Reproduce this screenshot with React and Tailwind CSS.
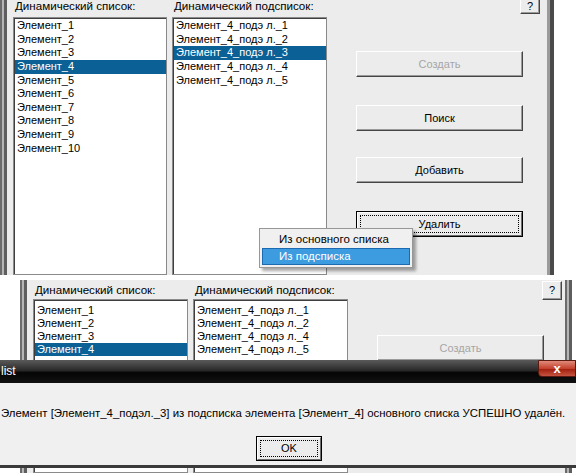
import React from "react";

const mainItems = ["Элемент_1","Элемент_2","Элемент_3","Элемент_4","Элемент_5","Элемент_6","Элемент_7","Элемент_8","Элемент_9","Элемент_10"];
const mainItems2 = ["Элемент_1","Элемент_2","Элемент_3","Элемент_4"];
const subItems = ["Элемент_4_подэ л._1","Элемент_4_подэ л._2","Элемент_4_подэ л._3","Элемент_4_подэ л._4","Элемент_4_подэ л._5"];
const subItems2 = ["Элемент_4_подэ л._1","Элемент_4_подэ л._2","Элемент_4_подэ л._4","Элемент_4_подэ л._5"];

function ListBox({ items, selected, tall, className }) {
  return (
    <div className={"bg-white border border-[#8a8a8a] shadow-[inset_1px_1px_0_#3f3f3f] pt-[1px] pl-[1px] overflow-hidden " + className}>
      {items.map((t, i) => (
        <div
          key={i}
          className={(tall ? "h-[13.63px] leading-[13.63px] " : "h-[13px] leading-[13px] ") + "pl-[2px] whitespace-nowrap " + (i === selected ? "bg-[#0b6096] text-white" : "text-black")}
        >
          {t}
        </div>
      ))}
    </div>
  );
}

function Btn({ children, disabled, focused, className }) {
  if (focused) {
    return (
      <div className={"border border-black " + className}>
        <div className="h-full border border-t-white border-l-white border-b-[#6e6e6e] border-r-[#6e6e6e] bg-[#ececec] p-[2px]">
          <div className="h-full border border-dotted border-black flex items-center justify-center text-black">{children}</div>
        </div>
      </div>
    );
  }
  return (
    <div className={"bg-[#ececec] border border-t-white border-l-white border-b-[#454545] border-r-[#454545] shadow-[inset_-1px_-1px_0_#9a9a9a] flex items-center justify-center " + (disabled ? "text-[#a6a6a6] " : "text-black ") + className}>
      {children}
    </div>
  );
}

function Frame({ className }) {
  return (
    <div className={"flex h-full " + (className || "")}>
      <div className="w-[2px] bg-[#6b6b6b]" />
      <div className="w-[2px] bg-[#b5b5b5]" />
      <div className="w-[3px] bg-[#5e5e5e]" />
    </div>
  );
}

export default function App() {
  return (
    <div className="relative w-[576px] h-[473px] bg-white overflow-hidden font-['Liberation_Sans',Arial,sans-serif] text-[11px] text-black">
      {/* top screenshot */}
      <div className="flex h-[275px]">
        <Frame />
        <div className="w-[540px] h-full bg-[#ececec] flex">
          <div className="ml-[6px] w-[154px] flex flex-col">
            <div className="h-[17px] leading-[12px] pl-[2px] whitespace-nowrap text-[11.6px]">Динамический список:</div>
            <ListBox items={mainItems} selected={3} tall className="flex-1" />
          </div>
          <div className="ml-[5px] w-[155px] flex flex-col">
            <div className="h-[17px] leading-[12px] pl-[2px] whitespace-nowrap text-[11.6px]">Динамический подсписок:</div>
            <ListBox items={subItems} selected={2} tall className="flex-1" />
          </div>
          <div className="ml-[29px] w-[184px] flex flex-col">
            <div className="flex justify-end -mt-[6px]">
              <Btn className="w-[20px] h-[20px] pt-[4px]">?</Btn>
            </div>
            <Btn disabled className="mt-[37px] w-[167px] h-[26px]">Создать</Btn>
            <Btn className="mt-[28px] w-[167px] h-[26px]">Поиск</Btn>
            <Btn className="mt-[26px] w-[167px] h-[26px]">Добавить</Btn>
            <Btn focused className="mt-[28px] w-[167px] h-[26px]">Удалить</Btn>
          </div>
        </div>
        <div className="flex h-full">
          <div className="w-[3px] bg-[#9a9a9a]" />
          <div className="w-[4px] bg-[#4a4a4a]" />
        </div>
      </div>

      {/* second screenshot */}
      <div className="flex mt-[5px] h-[193px]">
        <div className="w-[20px]" />
        <Frame />
        <div className="w-[538px] h-full bg-[#ececec] flex">
          <div className="ml-[6px] w-[155px] flex flex-col">
            <div className="h-[19px] pt-[4px] leading-[12px] pl-[2px] whitespace-nowrap text-[11.6px]">Динамический список:</div>
            <ListBox items={mainItems2} selected={3} className="flex-1 pt-[4px]" />
          </div>
          <div className="ml-[5px] w-[155px] flex flex-col">
            <div className="h-[19px] pt-[4px] leading-[12px] pl-[2px] whitespace-nowrap text-[11.6px]">Динамический подсписок:</div>
            <ListBox items={subItems2} className="flex-1 pt-[4px]" />
          </div>
          <div className="ml-[29px] w-[185px] flex flex-col">
            <div className="flex justify-end mt-[1px]">
              <Btn className="w-[20px] h-[19px]">?</Btn>
            </div>
            <Btn disabled className="mt-[35px] w-[167px] h-[26px]">Создать</Btn>
          </div>
        </div>
        <Frame />
      </div>

      {/* context menu */}
      <div className="absolute left-[259px] top-[228px] w-[154px] h-[40px] bg-[#f0f0f0] border border-[#979797] shadow-[3px_3px_3px_rgba(0,0,0,0.35)] p-[2px]">
        <div className="h-[17px] leading-[17px] pl-[17px] text-black text-[11.5px] whitespace-nowrap">Из основного списка</div>
        <div className="h-[17px] leading-[15px] pl-[16px] bg-[#3d9be0] border border-[#1c6bb0] text-white text-[11.5px] whitespace-nowrap">Из подсписка</div>
      </div>

      {/* message box */}
      <div className="absolute left-0 top-[360px] w-[576px] h-[108px] flex flex-col">
        <div className="relative h-[23px] bg-[linear-gradient(#5a5a5a,#2a2a2a_45%,#050505_55%,#111111)] text-white text-[12px] leading-[23px] pl-[1px]">
          list
          <div className="absolute right-0 top-0 w-[38px] h-[17px] rounded-bl-[4px] bg-[linear-gradient(#e08a7a,#c4412d_50%,#a3200f_55%,#c55440)] border border-[#5a1a10] flex items-center justify-center text-white font-bold text-[13px] leading-none">x</div>
        </div>
        <div className="flex-1 bg-[#f0f0f0] flex flex-col items-start">
          <div className="mt-[23px] pl-[1px] whitespace-nowrap text-[11.4px] leading-[14px]">Элемент [Элемент_4_подэл._3] из подсписка элемента [Элемент_4] основного списка УСПЕШНО удалён.</div>
          <div className="mt-[16px] ml-[256px]">
            <Btn focused className="w-[66px] h-[25px]">OK</Btn>
          </div>
        </div>
        <div className="h-[3px] bg-[#3a3a3a]" />
      </div>
    </div>
  );
}
